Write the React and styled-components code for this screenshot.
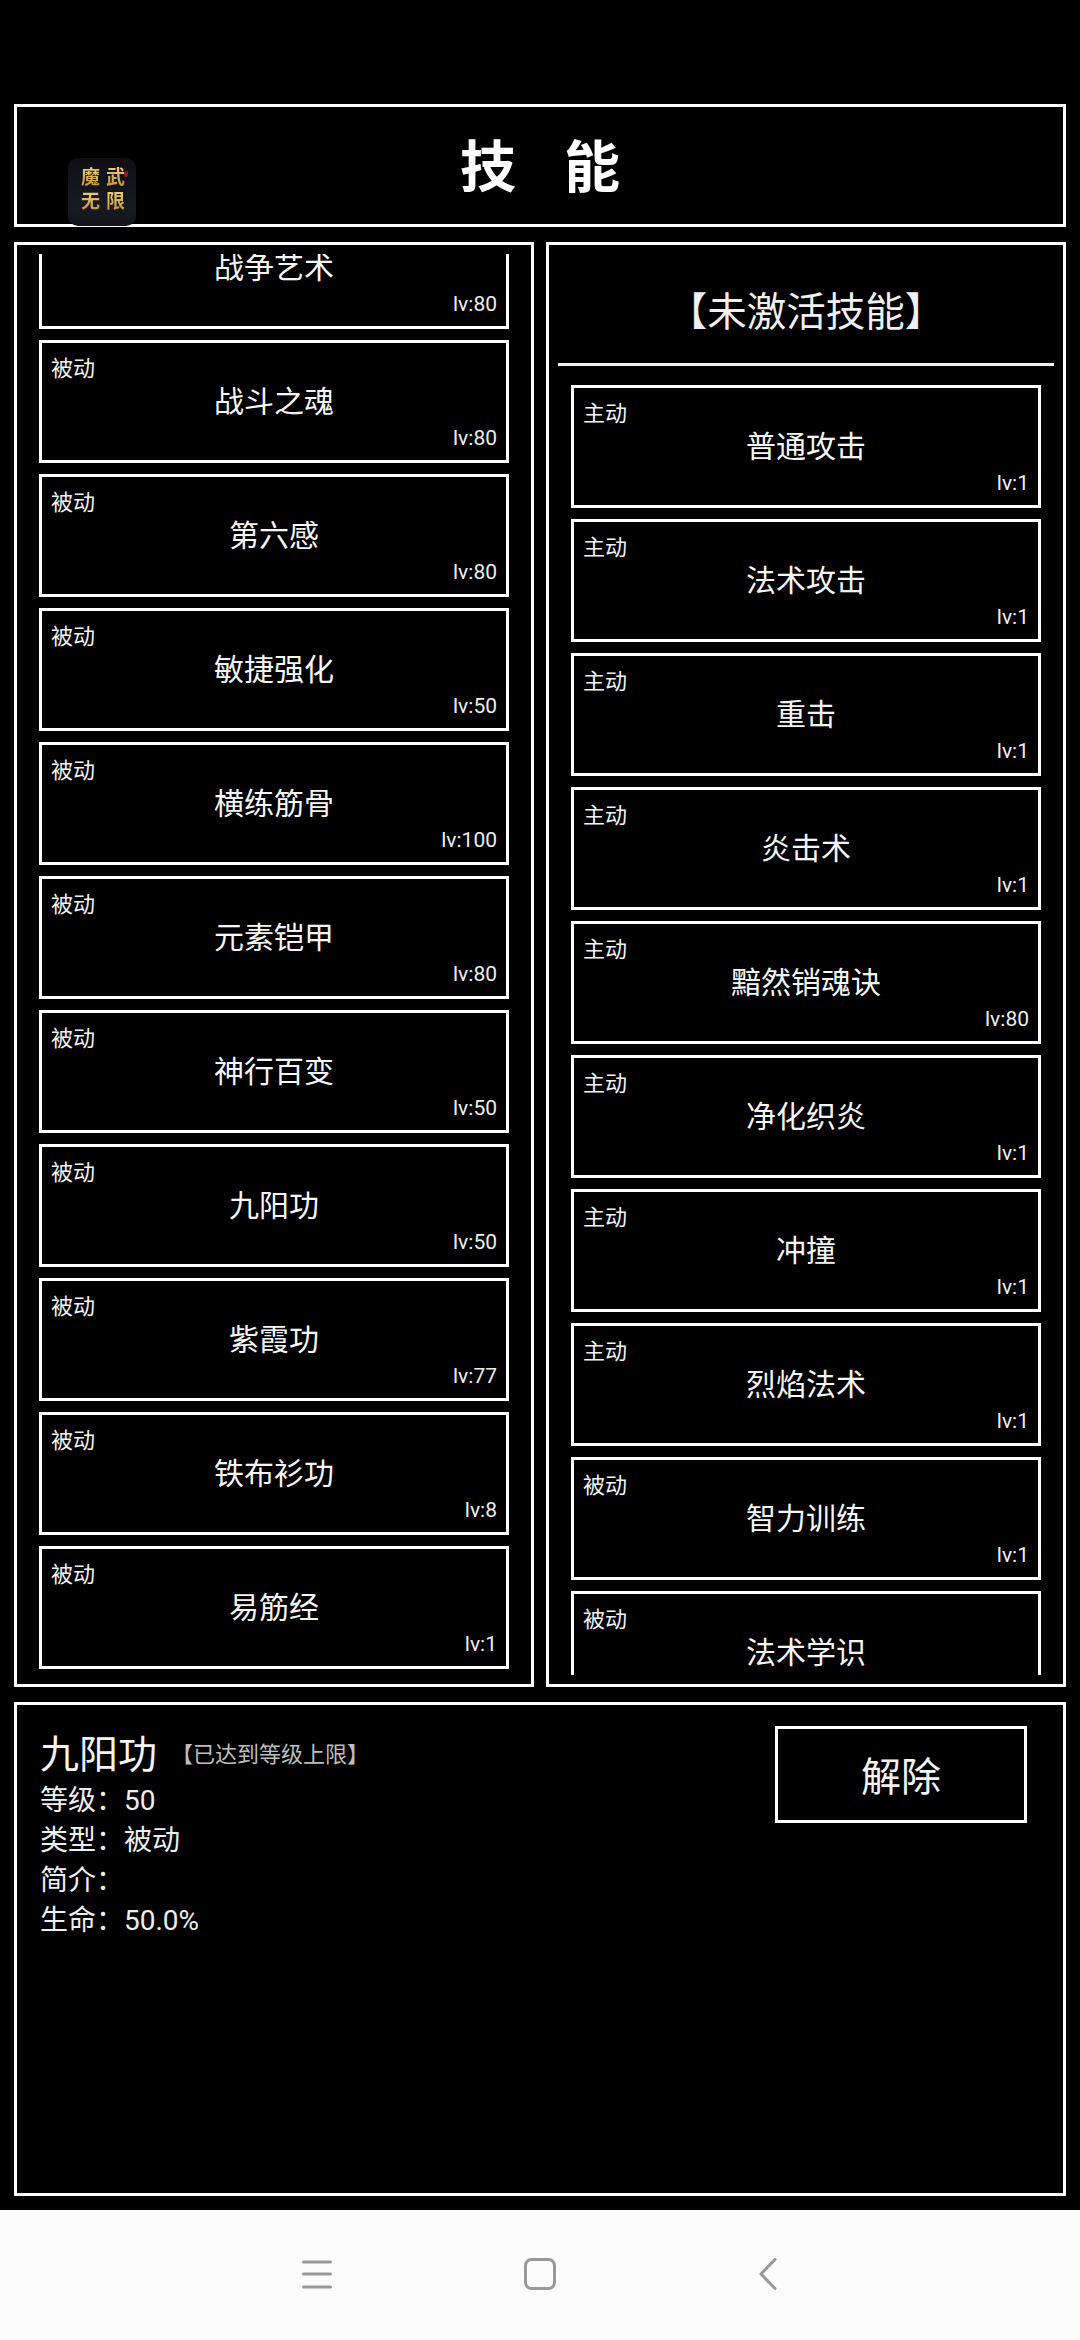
import React from "react";
import styled, { createGlobalStyle } from "styled-components";

const GlobalStyle = createGlobalStyle`
  html, body {
    margin: 0;
    padding: 0;
    background: #000;
  }
  body {
    font-family: Roboto, "Noto Sans CJK SC", sans-serif;
    color: #fff;
  }
  * {
    box-sizing: border-box;
  }
`;

const Screen = styled.div`
  width: 1080px;
  height: 2340px;
  background: #000;
  display: flex;
  flex-direction: column;
  overflow: hidden;
`;

const Game = styled.div`
  height: 2210px;
  padding: 104px 14px 0;
  display: flex;
  flex-direction: column;
  gap: 15px;
`;

const Header = styled.header`
  position: relative;
  height: 123px;
  border: 3px solid #fff;
  display: flex;
  align-items: center;
  justify-content: center;
  padding-top: 5px;
`;

const Title = styled.h1`
  margin: 0;
  font-size: 56px;
  line-height: 1;
  font-weight: 700;
  display: flex;
  gap: 48px;
`;

// app watermark sits on top of the header
const Logo = styled.div`
  position: absolute;
  left: 51px;
  top: 51px;
  width: 68px;
  height: 68px;
  border-radius: 10px;
  background: linear-gradient(180deg, #0e0e13 0%, #191922 70%, #14141a 100%);
  display: grid;
  grid-template-columns: 25px 25px;
  grid-auto-rows: 24px;
  padding: 8px 0 0 10px;
  font-size: 19px;
  line-height: 24px;
  font-weight: 700;
  text-align: center;

  span {
    background: linear-gradient(180deg, #f2d27c 0%, #b98a35 100%);
    -webkit-background-clip: text;
    background-clip: text;
    color: transparent;
  }

  &::after {
    content: "";
    position: absolute;
    right: 8px;
    top: 13px;
    width: 4px;
    height: 6px;
    border-radius: 2px;
    background: #a01818;
  }
`;

const Columns = styled.div`
  height: 1445px;
  display: grid;
  grid-template-columns: 1fr 1fr;
  gap: 12px;
`;

const Panel = styled.section`
  border: 3px solid #fff;
  padding: 9px;
  display: flex;
  flex-direction: column;
  min-height: 0;
`;

const PanelHead = styled.div`
  height: 112px;
  flex: none;
  display: flex;
  align-items: center;
  justify-content: center;
  border-bottom: 3px solid #f0f0f0;
  font-size: 39.5px;
  color: #f0f0f0;
  margin-bottom: 19px;
`;

const ListWindow = styled.div`
  flex: 1;
  min-height: 0;
  overflow: hidden;
`;

const List = styled.div`
  padding: 0 13px;
  margin-top: ${({ $offset }) => $offset || 0}px;
  display: flex;
  flex-direction: column;
  gap: 11px;
`;

const Card = styled.div`
  flex: none;
  height: 123px;
  border: 3px solid #fff;
  padding: 10px 9px 0;
  display: grid;
  grid-template-rows: 30px 37px 36px;
`;

const Kind = styled.div`
  font-size: 22px;
  line-height: 32px;
  color: #f4f4f4;
`;

const Name = styled.div`
  font-size: 30px;
  line-height: 37px;
  text-align: center;
  color: #f6f6f6;
`;

const Level = styled.div`
  font-size: 21px;
  line-height: 36px;
  text-align: right;
  color: #eee;
`;

const Detail = styled.section`
  height: 494px;
  border: 3px solid #fff;
  padding: 27px 36px 0 23px;
  display: flex;
  justify-content: space-between;
  align-items: flex-start;
`;

const Info = styled.div`
  display: flex;
  flex-direction: column;
`;

const InfoTitle = styled.div`
  display: flex;
  align-items: center;
  height: 46px;
  margin-bottom: 3px;
`;

const InfoName = styled.span`
  font-size: 39px;
  line-height: 46px;
  color: #f4f4f4;
`;

const InfoTag = styled.span`
  font-size: 22px;
  line-height: 46px;
  color: #bdbdbd;
  margin-left: 14px;
`;

const InfoLine = styled.div`
  font-size: 28px;
  line-height: 40px;
  height: 40px;
  color: #eee;
`;

const ReleaseButton = styled.button`
  width: 252px;
  height: 97px;
  margin-top: -6px;
  background: #000;
  border: 3px solid #fff;
  color: #f4f4f4;
  font-family: inherit;
  font-size: 40px;
  padding: 0 0 2px;
`;

const NavBar = styled.nav`
  height: 130px;
  background: #fbfbfb;
  display: grid;
  grid-template-columns: 302px 30px 192px 32px 203px 18px;
  padding-top: 48px;
  align-items: start;

  svg {
    display: block;
  }
`;

const NavSlot = styled.div`
  grid-column: ${({ $col }) => $col};
`;

const leftSkills = [
  { kind: "被动", name: "战争艺术", lv: 80 },
  { kind: "被动", name: "战斗之魂", lv: 80 },
  { kind: "被动", name: "第六感", lv: 80 },
  { kind: "被动", name: "敏捷强化", lv: 50 },
  { kind: "被动", name: "横练筋骨", lv: 100 },
  { kind: "被动", name: "元素铠甲", lv: 80 },
  { kind: "被动", name: "神行百变", lv: 50 },
  { kind: "被动", name: "九阳功", lv: 50 },
  { kind: "被动", name: "紫霞功", lv: 77 },
  { kind: "被动", name: "铁布衫功", lv: 8 },
  { kind: "被动", name: "易筋经", lv: 1 },
];

const rightSkills = [
  { kind: "主动", name: "普通攻击", lv: 1 },
  { kind: "主动", name: "法术攻击", lv: 1 },
  { kind: "主动", name: "重击", lv: 1 },
  { kind: "主动", name: "炎击术", lv: 1 },
  { kind: "主动", name: "黯然销魂诀", lv: 80 },
  { kind: "主动", name: "净化织炎", lv: 1 },
  { kind: "主动", name: "冲撞", lv: 1 },
  { kind: "主动", name: "烈焰法术", lv: 1 },
  { kind: "被动", name: "智力训练", lv: 1 },
  { kind: "被动", name: "法术学识", lv: 1 },
];

const SkillCard = ({ kind, name, lv }) => (
  <Card>
    <Kind>{kind}</Kind>
    <Name>{name}</Name>
    <Level>lv:{lv}</Level>
  </Card>
);

export default function App() {
  return (
    <Screen>
      <GlobalStyle />
      <Game>
        <Header>
          <Title>
            <span>技</span>
            <span>能</span>
          </Title>
          <Logo>
            <span>魔</span>
            <span>武</span>
            <span>无</span>
            <span>限</span>
          </Logo>
        </Header>
        <Columns>
          <Panel>
            <ListWindow>
              <List $offset={-48}>
                {leftSkills.map((skill) => (
                  <SkillCard key={skill.name} {...skill} />
                ))}
              </List>
            </ListWindow>
          </Panel>
          <Panel>
            <PanelHead>【未激活技能】</PanelHead>
            <ListWindow>
              <List>
                {rightSkills.map((skill) => (
                  <SkillCard key={skill.name} {...skill} />
                ))}
              </List>
            </ListWindow>
          </Panel>
        </Columns>
        <Detail>
          <Info>
            <InfoTitle>
              <InfoName>九阳功</InfoName>
              <InfoTag>【已达到等级上限】</InfoTag>
            </InfoTitle>
            <InfoLine>等级：50</InfoLine>
            <InfoLine>类型：被动</InfoLine>
            <InfoLine>简介：</InfoLine>
            <InfoLine>生命：50.0%</InfoLine>
          </Info>
          <ReleaseButton>解除</ReleaseButton>
        </Detail>
      </Game>
      <NavBar>
        <NavSlot $col={2}>
          <svg width="30" height="32" viewBox="0 0 30 32" fill="none" stroke="#999" strokeWidth="3" strokeLinecap="round">
            <path d="M1.5 4h27M1.5 16h27M1.5 29h27" />
          </svg>
        </NavSlot>
        <NavSlot $col={4}>
          <svg width="32" height="32" viewBox="0 0 32 32" fill="none" stroke="#999" strokeWidth="3">
            <rect x="1.5" y="1.5" width="29" height="29" rx="6" />
          </svg>
        </NavSlot>
        <NavSlot $col={6}>
          <svg width="18" height="32" viewBox="0 0 18 32" fill="none" stroke="#999" strokeWidth="3" strokeLinecap="round" strokeLinejoin="round">
            <path d="M16 1.5L2 16l14 14.5" />
          </svg>
        </NavSlot>
      </NavBar>
    </Screen>
  );
}
